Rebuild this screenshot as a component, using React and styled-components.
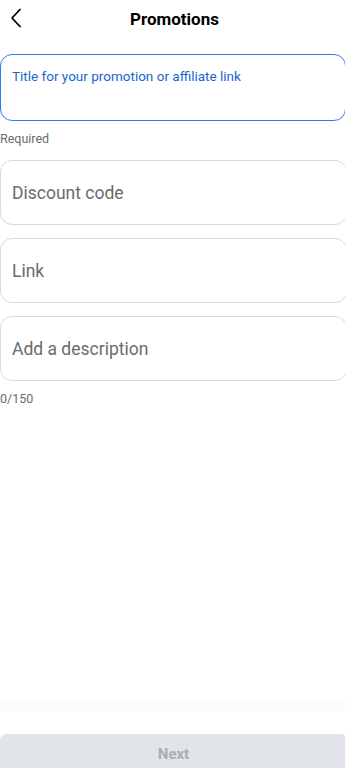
import React from "react";
import styled, { createGlobalStyle } from "styled-components";

const GlobalStyle = createGlobalStyle`
  html, body {
    margin: 0;
    padding: 0;
    background: #ffffff;
    overflow: hidden;
  }
  body {
    font-family: Roboto, "Liberation Sans", Arial, sans-serif;
  }
`;

const Page = styled.div`
  width: 345px;
  height: 768px;
  display: flex;
  flex-direction: column;
  overflow: hidden;
  background: #fff;
`;

const Header = styled.div`
  position: relative;
  height: 37px;
  display: flex;
  align-items: center;
  justify-content: center;
`;

const BackButton = styled.button`
  position: absolute;
  left: 6px;
  top: 6px;
  width: 20px;
  height: 24px;
  padding: 0;
  border: none;
  background: none;
  display: flex;
  align-items: center;
  justify-content: center;
`;

const Title = styled.h1`
  margin: 0;
  font-size: 17px;
  font-weight: 700;
  color: #000;
  padding-left: 4px;
`;

const Form = styled.div`
  flex: 1;
  display: flex;
  flex-direction: column;
  padding-top: 17px;
`;

const TitleBox = styled.div`
  width: 346px;
  height: 67px;
  box-sizing: border-box;
  border: 1.5px solid #2f7be9;
  border-radius: 12px;
  padding: 12px 11px;
  font-size: 13.5px;
  color: #1a66cc;
  line-height: 18px;
`;

const Hint = styled.div`
  font-size: 12.5px;
  color: #6b6b6b;
  margin: ${(p) => p.$margin};
`;

const Field = styled.div`
  width: 347px;
  height: 65px;
  box-sizing: border-box;
  border: 1px solid #d9d9d9;
  border-radius: 12px;
  padding: 0 11px;
  display: flex;
  align-items: center;
  font-size: 17.5px;
  color: #6b6b6b;
  margin-bottom: 13px;
`;

const Footer = styled.div`
  flex-shrink: 0;
  border-top: 11px solid #fafafa;
  padding-top: 23px;
  margin-bottom: -6px;
`;

const NextButton = styled.button`
  width: 347px;
  height: 40px;
  border: none;
  border-radius: 6px 6px 0 0;
  background: #e1e4e9;
  color: #abaeb3;
  font-family: Roboto, "Liberation Sans", Arial, sans-serif;
  font-size: 15px;
  font-weight: 700;
  padding: 0;
  display: flex;
  align-items: center;
  justify-content: center;
`;

const fields = ["Discount code", "Link", "Add a description"];

export default function App() {
  return (
    <Page>
      <GlobalStyle />
      <Header>
        <BackButton aria-label="Back">
          <svg width="12" height="20" viewBox="0 0 12 20" fill="none">
            <path
              d="M10 1.5 L2 10 L10 18.5"
              stroke="#000"
              strokeWidth="1.8"
              strokeLinecap="round"
              strokeLinejoin="round"
            />
          </svg>
        </BackButton>
        <Title>Promotions</Title>
      </Header>
      <Form>
        <TitleBox>Title for your promotion or affiliate link</TitleBox>
        <Hint $margin="10px 0 14px">Required</Hint>
        {fields.map((f) => (
          <Field key={f}>{f}</Field>
        ))}
        <Hint $margin="-3px 0 0">0/150</Hint>
      </Form>
      <Footer>
        <NextButton>Next</NextButton>
      </Footer>
    </Page>
  );
}
